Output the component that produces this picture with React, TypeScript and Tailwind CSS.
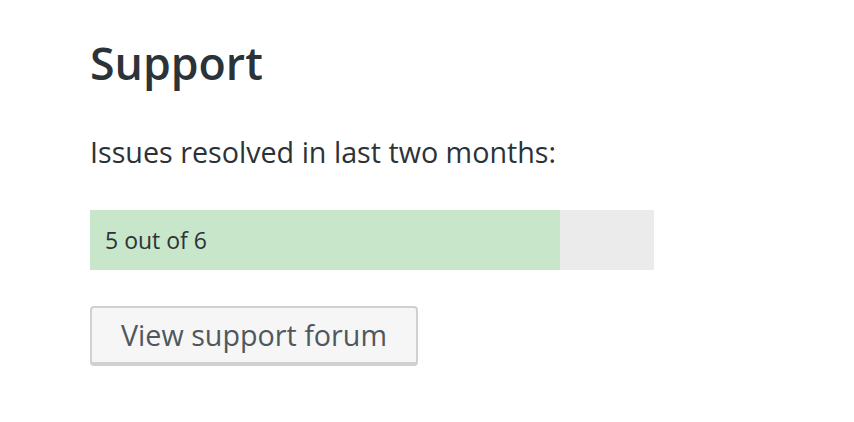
export default function App() {
  const resolved = 5;
  const total = 6;
  return (
    <div className="min-h-screen bg-white px-[90px] pt-[33px] font-['Open_Sans',sans-serif]">
      <h2 className="text-[44.7px] font-semibold leading-[60px] text-[#2c3338]">Support</h2>
      <p className="mt-[39px] text-[28.7px] leading-[40px] text-[#2c3338]">Issues resolved in last two months:</p>
      <div className="mt-[38px] flex h-[60px] w-[564px] bg-[#ebebeb]">
        <div
          className="flex items-center bg-[#c7e6ca] pl-[15px] text-[23px] text-[#2c3338]"
          style={{ width: `${(resolved / total) * 100}%` }}
        >
          {resolved} out of {total}
        </div>
      </div>
      <button className="mt-[36px] h-[60px] rounded-[4px] border-2 border-b-4 border-[#d0d0d0] bg-[#f6f6f6] px-[29px] text-[28.7px] leading-none text-[#50575e]">
        View support forum
      </button>
    </div>
  );
}
